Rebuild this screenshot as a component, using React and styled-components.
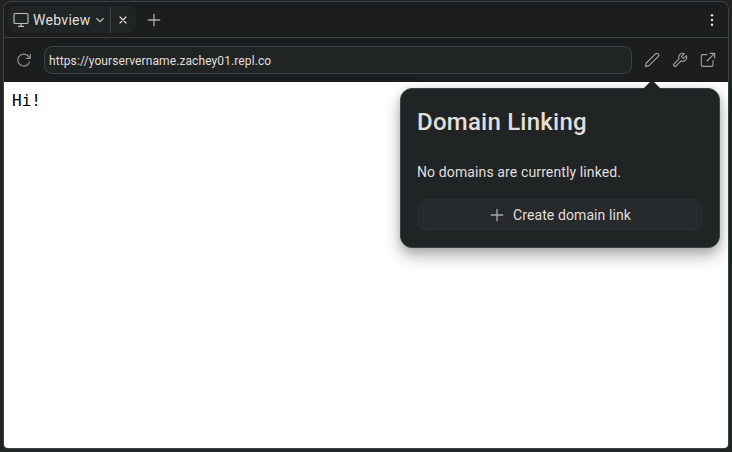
import React from 'react';
import styled, { createGlobalStyle } from 'styled-components';

const GlobalStyle = createGlobalStyle`
  *, *::before, *::after { box-sizing: border-box; }
  body {
    margin: 0;
    background: #202425;
    font-family: Roboto, "Open Sans", sans-serif;
    color: #e1dfdb;
    overflow: hidden;
  }
`;

const Page = styled.main`
  height: 452px;
  padding: 1px 3px 3px;
`;

const Pane = styled.section`
  display: flex;
  flex-direction: column;
  width: 726px;
  height: 448px;
  border: 1px solid #3c4344;
  border-radius: 8px 8px 5px 5px;
  background: #1c1d1f;
`;

const TabBar = styled.header`
  display: flex;
  align-items: center;
  flex: 0 0 36px;
  padding: 0 8px 0 4px;
  border-bottom: 1px solid #3c4344;
`;

const Tab = styled.div`
  display: flex;
  align-items: center;
  width: 128px;
  height: 27px;
  border-radius: 7px;
  background: #202425;
`;

const TabMain = styled.div`
  display: flex;
  align-items: center;
  width: 103px;
  height: 26px;
  padding-left: 5px;
  border-right: 1px solid #3c4344;
`;

const Label = styled.span`
  flex: none;
  width: ${(p) => p.$width}px;
  margin-left: ${(p) => p.$indent || 0}px;
  padding-top: ${(p) => p.$drop || 0}px;
  font-size: ${(p) => p.$size || 14}px;
  line-height: 20px;
  letter-spacing: ${(p) => p.$spacing || 0}px;
  white-space: nowrap;
`;

const IconButton = styled.button`
  display: flex;
  align-items: center;
  justify-content: center;
  flex: none;
  width: ${(p) => p.$width || 28}px;
  height: 28px;
  margin-left: ${(p) => p.$push || '0'};
  padding: 0;
  border: 0;
  background: none;
  color: ${(p) => p.$color || '#dfdfd9'};
`;

const Toolbar = styled.div`
  display: flex;
  align-items: center;
  flex: 0 0 44px;
  padding: 0 6px;
`;

const AddressBar = styled.div`
  display: flex;
  align-items: center;
  width: 588px;
  height: 28px;
  margin: 0 6px;
  padding-left: 4px;
  border: 1px solid #3c4344;
  border-radius: 8px;
  background: #202425;
`;

const Viewport = styled.div`
  position: relative;
  flex: 1;
  border-radius: 0 0 4px 4px;
  background: #fff;
`;

const Output = styled.pre`
  margin: 0;
  padding: 9px 8px;
  font: 16px/20px "DejaVu Sans Mono", monospace;
  color: #000;
`;

const Popover = styled.aside`
  position: absolute;
  top: 6px;
  left: 396px;
  width: 320px;
  height: 160px;
  padding: 17px 16px 16px;
  border: 1px solid #3c4344;
  border-radius: 12px;
  background: #202425;
  box-shadow: 0 8px 16px rgba(0, 0, 0, 0.3), 0 2px 8px rgba(0, 0, 0, 0.12);
`;

const Pointer = styled.svg`
  position: absolute;
  top: -8px;
  left: 242px;
`;

const Title = styled.h1`
  margin: 0 0 25px;
  font-size: 24px;
  font-weight: 500;
  line-height: 32px;
  letter-spacing: 0.23px;
  white-space: nowrap;
`;

const Message = styled.p`
  margin: 0 0 18px;
  font-size: 14px;
  line-height: 18px;
  letter-spacing: 0.12px;
  white-space: nowrap;
`;

const CreateButton = styled.button`
  display: flex;
  align-items: center;
  justify-content: center;
  gap: 8px;
  width: 286px;
  height: 32px;
  padding: 0;
  border: 0;
  border-radius: 8px;
  background: #272a2d;
  color: inherit;
  font-family: inherit;
`;

function Icon({ size = 16, weight = 1.7, color = 'currentColor', children }) {
  return (
    <svg width={size} height={size} viewBox="0 0 24 24" fill="none" stroke={color}
      strokeWidth={weight} strokeLinecap="round" strokeLinejoin="round">
      {children}
    </svg>
  );
}

const Monitor = () => (
  <Icon color="#c3c1b9">
    <rect x="1.5" y="2.2" width="21" height="15" rx="2" />
    <path d="M12 17.2v4.4M8.2 21.6h7.6" />
  </Icon>
);
const Chevron = () => <Icon size={12} weight={2.2} color="#c3c1b9"><path d="m5.5 9 6.5 6.5L18.500 9" /></Icon>;
const Close = () => <Icon size={12} weight={2.4}><path d="m6 6 12 12M18 6 6 18" /></Icon>;
const Plus = () => <Icon weight={2} color="#aaa9a5"><path d="M12 3.500v17M3.500 12h17" /></Icon>;
const More = () => (
  <svg width="16" height="16" viewBox="0 0 16 16" fill="currentColor">
    <circle cx="8" cy="3.200" r="1.200" /><circle cx="8" cy="8" r="1.200" /><circle cx="8" cy="12.800" r="1.200" />
  </svg>
);
const Reload = () => (
  <Icon><path d="M21.500 3.500v6h-6M20.300 15a9 9 0 1 1-1.900-9l3.100 3.500" /></Icon>
);
const Pencil = () => (
  <Icon><path d="M17.200 2.800a2.800 2.800 0 0 1 4 4L7.500 20.500 2 22l1.500-5.500Z" /></Icon>
);
const Wrench = () => (
  <Icon><path d="M14.700 6.300a1 1 0 0 0 0 1.400l1.600 1.600a1 1 0 0 0 1.400 0l3.800-3.800a6 6 0 0 1-7.900 7.900l-7.600 7.600a2.100 2.100 0 0 1-3-3l7.600-7.600a6 6 0 0 1 7.900-7.900Z" /></Icon>
);
const External = () => (
  <Icon><path d="M10.500 4H4a2 2 0 0 0-2 2v13.500a2 2 0 0 0 2 2h13.500a2 2 0 0 0 2-2V13M15 2h7v7M22 2 10.500 13.500" /></Icon>
);

function DomainPopover() {
  return (
    <Popover>
      <Pointer width="18" height="8" viewBox="0 0 18 8">
        <path d="M0 8 6.500 1.500Q9-.8 11.500 1.500L18 8Z" fill="#202425" />
      </Pointer>
      <Title>Domain Linking</Title>
      <Message>No domains are currently linked.</Message>
      <CreateButton>
        <Plus />
        <Label $width={118} $spacing={0.1}>Create domain link</Label>
      </CreateButton>
    </Popover>
  );
}

export default function App() {
  return (
    <>
      <GlobalStyle />
      <Page>
        <Pane>
          <TabBar>
            <Tab>
              <TabMain>
                <Monitor />
                <Label $width={61} $indent={4} $drop={1} $spacing={0.3}>Webview</Label>
                <Chevron />
              </TabMain>
              <IconButton $width={24} aria-label="Close tab"><Close /></IconButton>
            </Tab>
            <IconButton $width={36} aria-label="New tab"><Plus /></IconButton>
            <IconButton $width={16} $push="auto" aria-label="More"><More /></IconButton>
          </TabBar>
          <Toolbar>
            <IconButton $color="#96948c" aria-label="Reload"><Reload /></IconButton>
            <AddressBar>
              <Label $width={224} $size={12} $drop={2} $spacing={0.1}>https://yourservername.zachey01.repl.co</Label>
            </AddressBar>
            <IconButton $color="#a09e95" aria-label="Edit"><Pencil /></IconButton>
            <IconButton $color="#a09e95" aria-label="Settings"><Wrench /></IconButton>
            <IconButton $color="#a09e95" aria-label="Open"><External /></IconButton>
          </Toolbar>
          <Viewport>
            <Output>Hi!</Output>
            <DomainPopover />
          </Viewport>
        </Pane>
      </Page>
    </>
  );
}
